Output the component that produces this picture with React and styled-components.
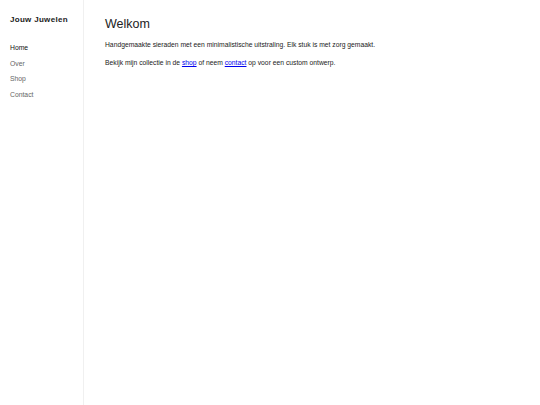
import styled, { createGlobalStyle } from "styled-components";

const GlobalStyle = createGlobalStyle`
  html, body {
    margin: 0;
    padding: 0;
    background: #fff;
  }
  body {
    font-family: "Liberation Sans", Arial, sans-serif;
    color: #222;
  }
`;

const Layout = styled.div`
  display: flex;
  min-height: 405px;
`;

const Sidebar = styled.aside`
  width: 84px;
  box-sizing: border-box;
  border-right: 1px solid #f0f0f0;
  padding: 15px 10px;
`;

const Brand = styled.div`
  font-size: 8px;
  font-weight: bold;
  letter-spacing: 0.3px;
  color: #222;
  margin-bottom: 19px;
`;

const Nav = styled.nav`
  display: flex;
  flex-direction: column;
  gap: 6.6px;
`;

const NavItem = styled.a`
  font-size: 6.8px;
  line-height: 9px;
  color: ${(p) => (p.$active ? "#111" : "#666")};
  text-decoration: none;
`;

const Main = styled.main`
  flex: 1;
  padding: 17px 21px;
`;

const Title = styled.h1`
  font-size: 12.5px;
  font-weight: normal;
  margin: 0 0 9px;
  color: #222;
`;

const Text = styled.p`
  font-size: 6.75px;
  line-height: 9px;
  margin: 0 0 9px;
  color: #222;
`;

const Link = styled.a`
  color: #0000ee;
  text-decoration: underline;
`;

export default function App() {
  return (
    <>
      <GlobalStyle />
      <Layout>
        <Sidebar>
          <Brand>Jouw Juwelen</Brand>
          <Nav>
            <NavItem $active>Home</NavItem>
            <NavItem>Over</NavItem>
            <NavItem>Shop</NavItem>
            <NavItem>Contact</NavItem>
          </Nav>
        </Sidebar>
        <Main>
          <Title>Welkom</Title>
          <Text>
            Handgemaakte sieraden met een minimalistische uitstraling. Elk stuk is met zorg gemaakt.
          </Text>
          <Text>
            Bekijk mijn collectie in de <Link href="#">shop</Link> of neem{" "}
            <Link href="#">contact</Link> op voor een custom ontwerp.
          </Text>
        </Main>
      </Layout>
    </>
  );
}
